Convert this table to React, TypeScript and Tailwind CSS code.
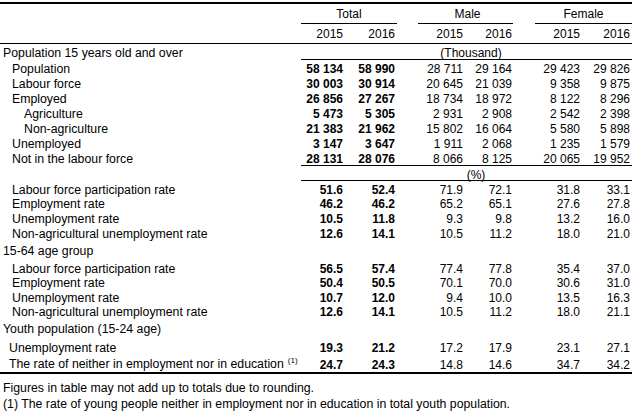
const grid = "grid grid-cols-[301px_44px_52px_21px_47px_48px_22px_47px_50px] w-[632px]";

type Row = { label: string; pad: string; v: string[]; h: string; sup?: boolean };

const DataRow = ({ label, pad, v, h, sup }: Row) => (
  <div className={`${grid} ${h} items-center pt-[2px]`}>
    <div className={`${pad} whitespace-nowrap text-[12.3px]`}>
      {label}
      {sup && <span className="text-[8px] ml-[4px] relative -top-[5px]">(1)</span>}
    </div>
    <div className="text-right pr-[2px] font-bold">{v[0]}</div>
    <div className="text-right pr-[2px] font-bold">{v[1]}</div>
    <div />
    <div className="text-right pr-[2px]">{v[2]}</div>
    <div className="text-right pr-[1px]">{v[3]}</div>
    <div />
    <div className="text-right pr-[2px]">{v[4]}</div>
    <div className="text-right pr-[2px]">{v[5]}</div>
  </div>
);

const Title = ({ label, pad, h }: { label: string; pad: string; h: string }) => (
  <div className={`${h} flex items-center pt-[2px] ${pad} whitespace-nowrap text-[12.3px]`}>{label}</div>
);

const fullLine = "h-px bg-black w-[632px]";
const partLine = "h-px bg-black ml-[301px] w-[331px]";

export default function App() {
  return (
    <div className="w-[637px] h-[412px] bg-white text-black text-[12px] leading-[15px] font-['Liberation_Sans',Arial,sans-serif] overflow-hidden">
      <div className="mt-[2px] h-[2px] bg-black w-[632px]" />

      {/* group header */}
      <div className={`${grid} h-[19px] items-center pt-[2px]`}>
        <div />
        <div className="col-span-2 text-center">Total</div>
        <div />
        <div className="col-span-2 text-center pl-[4px]">Male</div>
        <div />
        <div className="col-span-2 text-center">Female</div>
      </div>
      <div className={`${grid} h-px`}>
        <div />
        <div className="col-span-2 bg-black" />
        <div />
        <div className="col-span-2 bg-black" />
        <div />
        <div className="col-span-2 bg-black" />
      </div>

      {/* years */}
      <div className={`${grid} h-[19px] items-center pt-[2px]`}>
        <div />
        <div className="text-right pr-[2px]">2015</div>
        <div className="text-right pr-[2px]">2016</div>
        <div />
        <div className="text-right pr-[2px]">2015</div>
        <div className="text-right pr-[1px]">2016</div>
        <div />
        <div className="text-right pr-[2px]">2015</div>
        <div className="text-right pr-[2px]">2016</div>
      </div>
      <div className={fullLine} />

      {/* Thousand */}
      <div className={`${grid} h-[15px] items-center pt-[2px]`}>
        <div className="pl-[3px] whitespace-nowrap text-[12.3px]">Population 15 years old and over</div>
        <div className="col-span-8 text-center pl-[9px]">(Thousand)</div>
      </div>
      <div className={partLine} />

      <DataRow label="Population" pad="pl-[12px]" h="h-[15px]" v={["58 134", "58 990", "28 711", "29 164", "29 423", "29 826"]} />
      <DataRow label="Labour force" pad="pl-[12px]" h="h-[15px]" v={["30 003", "30 914", "20 645", "21 039", "9 358", "9 875"]} />
      <DataRow label="Employed" pad="pl-[12px]" h="h-[15px]" v={["26 856", "27 267", "18 734", "18 972", "8 122", "8 296"]} />
      <DataRow label="Agriculture" pad="pl-[24px]" h="h-[15px]" v={["5 473", "5 305", "2 931", "2 908", "2 542", "2 398"]} />
      <DataRow label="Non-agriculture" pad="pl-[24px]" h="h-[15px]" v={["21 383", "21 962", "15 802", "16 064", "5 580", "5 898"]} />
      <DataRow label="Unemployed" pad="pl-[12px]" h="h-[15px]" v={["3 147", "3 647", "1 911", "2 068", "1 235", "1 579"]} />
      <DataRow label="Not in the labour force" pad="pl-[12px]" h="h-[15px]" v={["28 131", "28 076", "8 066", "8 125", "20 065", "19 952"]} />
      <div className={partLine} />

      {/* percent */}
      <div className={`${grid} h-[14px] items-center pt-[2px]`}>
        <div />
        <div className="col-span-8 text-center pl-[19px]">(%)</div>
      </div>
      <div className={partLine} />

      <DataRow label="Labour force participation rate" pad="pl-[12px]" h="h-[14px]" v={["51.6", "52.4", "71.9", "72.1", "31.8", "33.1"]} />
      <DataRow label="Employment rate" pad="pl-[12px]" h="h-[15px]" v={["46.2", "46.2", "65.2", "65.1", "27.6", "27.8"]} />
      <DataRow label="Unemployment rate" pad="pl-[12px]" h="h-[15px]" v={["10.5", "11.8", "9.3", "9.8", "13.2", "16.0"]} />
      <DataRow label="Non-agricultural unemployment rate" pad="pl-[12px]" h="h-[15px]" v={["12.6", "14.1", "10.5", "11.2", "18.0", "21.0"]} />

      <Title label="15-64 age group" pad="pl-[3px]" h="h-[20px]" />
      <DataRow label="Labour force participation rate" pad="pl-[12px]" h="h-[14px]" v={["56.5", "57.4", "77.4", "77.8", "35.4", "37.0"]} />
      <DataRow label="Employment rate" pad="pl-[12px]" h="h-[15px]" v={["50.4", "50.5", "70.1", "70.0", "30.6", "31.0"]} />
      <DataRow label="Unemployment rate" pad="pl-[12px]" h="h-[14px]" v={["10.7", "12.0", "9.4", "10.0", "13.5", "16.3"]} />
      <DataRow label="Non-agricultural unemployment rate" pad="pl-[12px]" h="h-[15px]" v={["12.6", "14.1", "10.5", "11.2", "18.0", "21.1"]} />

      <Title label="Youth population (15-24 age)" pad="pl-[3px]" h="h-[21px]" />
      <DataRow label="Unemployment rate" pad="pl-[9px]" h="h-[16px]" v={["19.3", "21.2", "17.2", "17.9", "23.1", "27.1"]} />
      <DataRow label="The rate of neither in employment nor in education" pad="pl-[9px]" h="h-[15px]" sup v={["24.7", "24.3", "14.8", "14.6", "34.7", "34.2"]} />
      <div className="mt-[2px] h-[2px] bg-black w-[632px]" />

      <div className="mt-[5px] h-[16px] flex items-center pt-[2px] pl-[3px] whitespace-nowrap text-[12.3px]">
        Figures in table may not add up to totals due to rounding.
      </div>
      <div className="h-[16px] flex items-center pt-[2px] pl-[3px] whitespace-nowrap text-[12.3px]">
        (1) The rate of young people neither in employment nor in education in total youth population.
      </div>
    </div>
  );
}
